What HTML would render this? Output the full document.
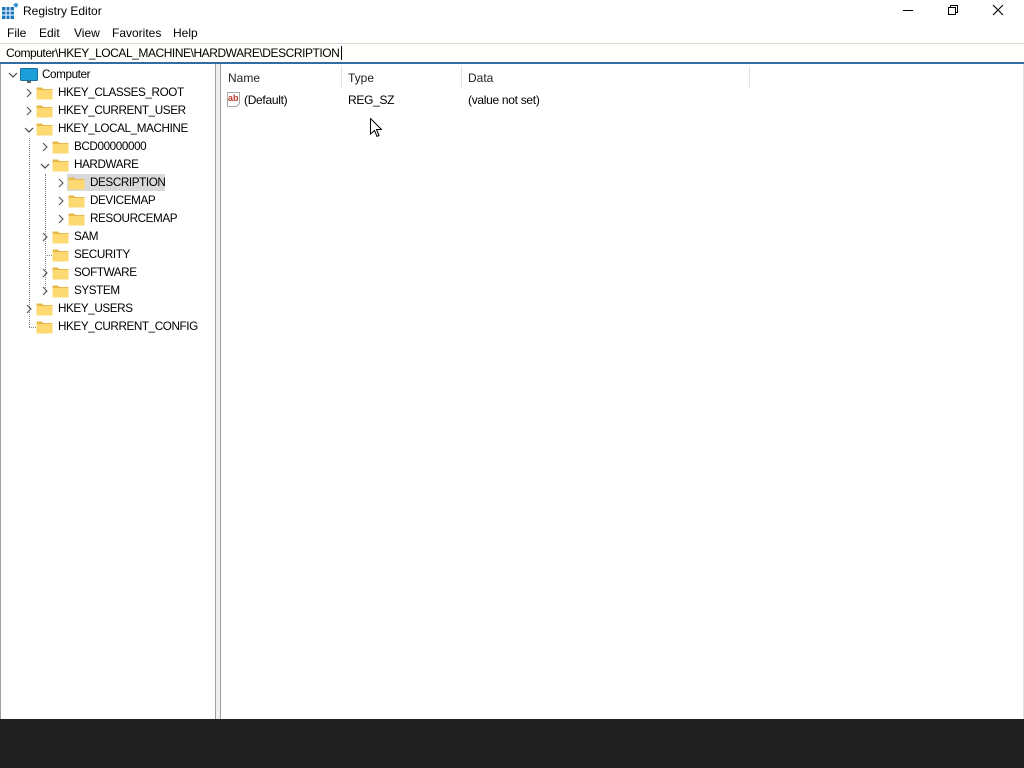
<!DOCTYPE html>
<html><head><meta charset="utf-8"><style>
*{margin:0;padding:0;box-sizing:border-box}
body{width:1024px;height:768px;background:#fff;position:relative;overflow:hidden;font-family:"Liberation Sans",sans-serif;font-size:12px;color:#000}
.a{position:absolute;white-space:nowrap}
.row{position:absolute;height:18px;line-height:18px;font-size:11.7px;letter-spacing:-0.4px}
</style></head><body>
<svg class="a" style="left:2px;top:3px" width="16" height="16" viewBox="0 0 16 16"><rect x="0" y="4" width="12" height="12" fill="#1b75bb"/><g stroke="#fff" stroke-width="1"><line x1="4" y1="4" x2="4" y2="16"/><line x1="8" y1="4" x2="8" y2="16"/><line x1="0" y1="8" x2="12" y2="8"/><line x1="0" y1="12" x2="12" y2="12"/></g><rect x="12" y="0" width="4" height="4" fill="#3a9ad9" transform="rotate(45 14 2)"/></svg>
<div class="a" style="left:23px;top:4px;font-size:12px">Registry Editor</div>
<div class="a" style="left:903px;top:10px;width:10px;height:1px;background:#000"></div>
<svg class="a" style="left:947px;top:4px" width="12" height="12"><rect x="1.5" y="3.5" width="7" height="7" fill="none" stroke="#000"/><path d="M3.5 3.5V1.5H10.5V8.5H8.5" fill="none" stroke="#000"/></svg>
<svg class="a" style="left:992px;top:4px" width="12" height="12"><path d="M1 1L11 11M11 1L1 11" stroke="#000" stroke-width="1.1"/></svg>
<div class="a" style="left:7px;top:26px">File</div>
<div class="a" style="left:39px;top:26px">Edit</div>
<div class="a" style="left:74px;top:26px">View</div>
<div class="a" style="left:112px;top:26px">Favorites</div>
<div class="a" style="left:173px;top:26px">Help</div>
<div class="a" style="left:0;top:43px;width:1024px;height:1px;background:#dadada"></div>
<div class="a" style="left:0;top:44px;width:1024px;height:18px;background:#fffffb"></div>
<div class="a" style="left:6px;top:46px;letter-spacing:-0.45px">Computer\HKEY_LOCAL_MACHINE\HARDWARE\DESCRIPTION</div>
<div class="a" style="left:341px;top:46px;width:1px;height:14px;background:#000"></div>
<div class="a" style="left:0;top:62px;width:1024px;height:2px;background:#2f6ca8"></div>
<div class="a" style="left:0;top:64px;width:1px;height:656px;background:#a0a0a0"></div>
<div class="a" style="left:215px;top:64px;width:1px;height:656px;background:#a0a0a0"></div>
<div class="a" style="left:216px;top:64px;width:4px;height:656px;background:#f0f0f0"></div>
<div class="a" style="left:220px;top:64px;width:1px;height:656px;background:#a0a0a0"></div>
<div class="a" style="left:1023px;top:64px;width:1px;height:656px;background:#e0e0e0"></div>
<div class="a" style="left:228px;top:71px;color:#222">Name</div>
<div class="a" style="left:341px;top:66px;width:1px;height:22px;background:#e5e5e5"></div>
<div class="a" style="left:348px;top:71px;color:#222">Type</div>
<div class="a" style="left:461px;top:66px;width:1px;height:22px;background:#e5e5e5"></div>
<div class="a" style="left:468px;top:71px;color:#222">Data</div>
<div class="a" style="left:749px;top:66px;width:1px;height:22px;background:#e5e5e5"></div>
<svg class="a" style="left:226px;top:91px" width="16" height="16"><path d="M1.5 1.5H13.5V12.5L10.5 15.5H1.5Z" fill="#fff" stroke="#aaa"/><text x="2" y="10" font-size="9" font-weight="bold" fill="#c0392b" font-family="Liberation Sans">ab</text></svg>
<div class="a" style="left:244px;top:93px;letter-spacing:-0.3px">(Default)</div>
<div class="a" style="left:348px;top:93px;letter-spacing:-0.3px">REG_SZ</div>
<div class="a" style="left:468px;top:93px;letter-spacing:-0.3px">(value not set)</div>
<svg class="a" style="left:370px;top:118px" width="12" height="20"><path d="M0.5 0.5V16L4.5 12.5L7 18.5L9 17.5L6.5 11.5H11.5Z" fill="#fff" stroke="#000"/></svg>
<div class="a" style="left:29px;top:138px;width:0;height:189px;border-left:1px dotted #888"></div>
<div class="a" style="left:29px;top:327px;width:7px;border-top:1px dotted #888"></div>
<div class="a" style="left:45px;top:174px;width:0;height:118px;border-left:1px dotted #888"></div>
<div class="a" style="left:45px;top:255px;width:7px;border-top:1px dotted #888"></div>
<div class="a" style="left:67px;top:174px;width:98px;height:17px;background:#d9d9d9"></div>
<svg class="a" style="left:8px;top:71px" width="10" height="8"><path d="M1 2L5 6L9 2" fill="none" stroke="#444" stroke-width="1.2"/></svg>
<svg class="a" style="left:20px;top:68px" width="18" height="16"><rect x="0.5" y="0.5" width="17" height="12" rx="1" fill="#1c9fd9" stroke="#1a6fa0"/><rect x="7" y="13" width="4" height="2" fill="#666"/></svg>
<div class="row" style="left:42px;top:66px">Computer</div>
<div id="tree"></div>
<script>
var rows=[
[1,'HKEY_CLASSES_ROOT','>'],[1,'HKEY_CURRENT_USER','>'],[1,'HKEY_LOCAL_MACHINE','v'],
[2,'BCD00000000','>'],[2,'HARDWARE','v'],[3,'DESCRIPTION','>'],[3,'DEVICEMAP','>'],[3,'RESOURCEMAP','>'],
[2,'SAM','>'],[2,'SECURITY',''],[2,'SOFTWARE','>'],[2,'SYSTEM','>'],[1,'HKEY_USERS','>'],[1,'HKEY_CURRENT_CONFIG','']];
var h='';
rows.forEach(function(r,i){
 var top=84+i*18,l=r[0],b=16*(l-1),fx=36+b,tx=58+b;
 if(r[2]=='>')h+='<svg class="a" style="left:'+(25+b)+'px;top:'+(top+4)+'px" width="8" height="10"><path d="M2 1L6 5L2 9" fill="none" stroke="#555" stroke-width="1.1"/></svg>';
 if(r[2]=='v')h+='<svg class="a" style="left:'+(24+b)+'px;top:'+(top+6)+'px" width="10" height="8"><path d="M1 2L5 6L9 2" fill="none" stroke="#444" stroke-width="1.2"/></svg>';
 h+='<svg class="a" style="left:'+fx+'px;top:'+(top+2)+'px" width="17" height="14"><path d="M0.5 1.5H6L7.5 3H16.5V13.5H0.5Z" fill="#e8b84a"/><rect x="0.5" y="4" width="16" height="9.5" fill="#fcd971"/></svg>';
 h+='<div class="row" style="left:'+tx+'px;top:'+top+'px">'+r[1]+'</div>';
});
document.getElementById('tree').innerHTML=h;
</script>
<div class="a" style="left:0;top:719px;width:1024px;height:49px;background:#202020"></div>
</body></html>
